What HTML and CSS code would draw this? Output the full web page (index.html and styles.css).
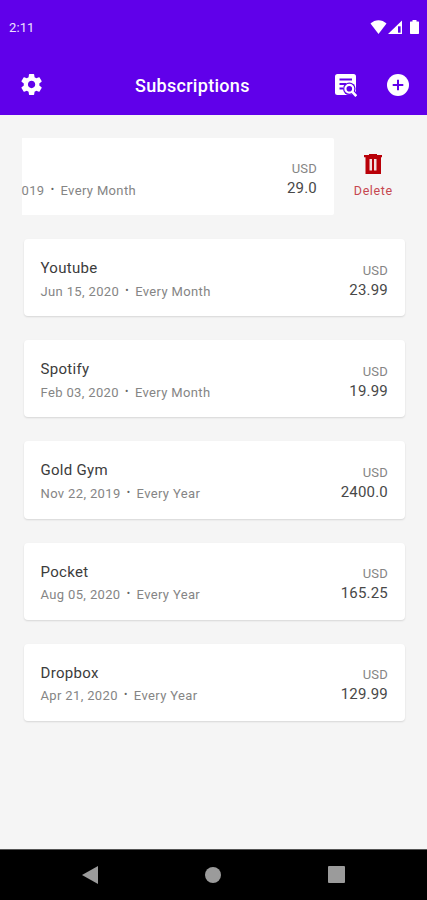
FILE: index.html
```html
<!DOCTYPE html>
<html lang="en">
<head>
<meta charset="utf-8">
<title>Subscriptions</title>
<link rel="stylesheet" href="styles.css">
</head>
<body>
<div class="screen">
  <header class="top">
    <div class="status">
      <span class="time">2:11</span>
      <svg class="status-icons" width="51" height="16" viewBox="0 0 51 16" fill="#fff">
        <path d="M0.5 3.600C5-1 12-1 16.500 3.600L8.500 14Z"/>
        <path d="M32 .5V14H18Z"/>
        <path d="M28 6.300h2.600v6.400H28z" fill="#6000ea"/>
        <path d="M40.500 1.500h2V0h4v1.500h2q.5 0 .5.700V13.300q0 .7-.7.700h-7.600q-.7 0-.7-.700V2.200q0-.7.500-.700z"/>
      </svg>
    </div>
    <div class="toolbar">
      <svg class="icon gear" viewBox="0 0 24 24" fill="#fff"><path d="M19.500 12.980c.04-.32.070-.64.070-.98s-.03-.66-.07-.98l2.110-1.650c.19-.15.240-.42.120-.64l-2-3.460c-.12-.22-.39-.3-.61-.22l-2.490 1c-.52-.4-1.080-.73-1.690-.98l-.38-2.650C14.530 2.180 14.320 2 14.070 2h-4c-.25 0-.46.180-.49.420L9.200 5.070c-.61.250-1.170.590-1.690.980l-2.490-1c-.23-.09-.49 0-.61.220l-2 3.460c-.13.220-.07.490.120.640l2.110 1.650c-.04.320-.07.650-.07.980s.03.660.070.980l-2.110 1.650c-.19.150-.24.420-.12.640l2 3.460c.12.220.39.300.61.220l2.490-1c.52.400 1.080.730 1.690.980l.38 2.650c.03.240.24.420.49.420h4c.25 0 .46-.18.490-.42l.38-2.650c.61-.25 1.170-.59 1.690-.98l2.490 1c.23.090.49 0 .61-.22l2-3.460c.12-.22.070-.49-.12-.64l-2.110-1.650zM12.070 15.500c-1.930 0-3.500-1.570-3.500-3.500s1.570-3.500 3.500-3.500 3.500 1.570 3.500 3.500-1.570 3.500-3.500 3.500z"/></svg>
      <h1>Subscriptions</h1>
      <svg class="icon report" viewBox="0 0 22 24" fill="none">
        <rect x="0" y="0" width="21" height="21" rx="2.500" fill="#fff"/>
        <path d="M4.500 5.500h12.500M4.500 10h6.500M4.500 14.500h3.500" stroke="#6000ea" stroke-width="1.800"/>
        <circle cx="14.300" cy="14.800" r="6.300" fill="#6000ea"/>
        <path d="M17 17.500l5 5" stroke="#6000ea" stroke-width="5"/>
        <circle cx="14.300" cy="14.800" r="3.900" stroke="#fff" stroke-width="2.200"/>
        <path d="M17 17.500l4.300 4.600" stroke="#fff" stroke-width="2.600"/>
      </svg>
      <svg class="icon add" viewBox="0 0 22 22"><circle cx="11" cy="11" r="11" fill="#fff"/><path d="M11 5.700v10.600M5.700 11h10.600" stroke="#6000ea" stroke-width="2"/></svg>
    </div>
  </header>

  <main class="list">
    <div class="swiped">
      <div class="swiped-card">
        <div class="meta"><span>019</span><span class="dot">•</span><span>Every Month</span></div>
        <div class="price"><span class="cur">USD</span><span class="amount">29.0</span></div>
      </div>
      <div class="delete">
        <svg width="18" height="20" viewBox="0 0 18 20"><path d="M0 1h5V0h8v1h5v2.200h-1V20H1.500V3.200H0z" fill="#b90008"/><path d="M5.500 5h2.500v11.500H5.500zM10 5h2.500v11.500H10z" fill="#f3dfe0"/></svg>
        <span>Delete</span>
      </div>
    </div>
    <article class="card">
      <div><h2>Youtube</h2><div class="meta"><span>Jun 15, 2020</span><span class="dot">•</span><span>Every Month</span></div></div>
      <div class="price"><span class="cur">USD</span><span class="amount">23.99</span></div>
    </article>
    <article class="card">
      <div><h2>Spotify</h2><div class="meta"><span>Feb 03, 2020</span><span class="dot">•</span><span>Every Month</span></div></div>
      <div class="price"><span class="cur">USD</span><span class="amount">19.99</span></div>
    </article>
    <article class="card">
      <div><h2>Gold Gym</h2><div class="meta"><span>Nov 22, 2019</span><span class="dot">•</span><span>Every Year</span></div></div>
      <div class="price"><span class="cur">USD</span><span class="amount">2400.0</span></div>
    </article>
    <article class="card">
      <div><h2>Pocket</h2><div class="meta"><span>Aug 05, 2020</span><span class="dot">•</span><span>Every Year</span></div></div>
      <div class="price"><span class="cur">USD</span><span class="amount">165.25</span></div>
    </article>
    <article class="card">
      <div><h2>Dropbox</h2><div class="meta"><span>Apr 21, 2020</span><span class="dot">•</span><span>Every Year</span></div></div>
      <div class="price"><span class="cur">USD</span><span class="amount">129.99</span></div>
    </article>
  </main>

  <nav class="navbar">
    <svg width="16" height="18" viewBox="0 0 16 18"><path d="M0 9L16 0v18z" fill="#9b9b9b"/></svg>
    <svg width="16" height="16" viewBox="0 0 16 16"><circle cx="8" cy="8" r="8" fill="#9b9b9b"/></svg>
    <svg width="17" height="17" viewBox="0 0 17 17"><rect width="17" height="17" rx="1" fill="#9b9b9b"/></svg>
  </nav>
</div>
</body>
</html>
```

FILE: styles.css
```css
* { box-sizing: border-box; }
body { margin: 0; font-family: Roboto, "Liberation Sans", sans-serif; }
h1, h2 { margin: 0; }
svg { display: block; flex: none; }
.screen { width: 427px; height: 900px; display: flex; flex-direction: column; background: #f5f5f5; overflow: hidden; }

.top { height: 114.500px; flex: none; background: #6000ea; color: #fff; }
.status { height: 56px; padding: 0 6px 0 9px; display: flex; justify-content: space-between; }
.time { margin-top: 20px; font-size: 13px; line-height: 16px; letter-spacing: .1px; color: #ede2fd; }
.status-icons { margin-top: 20px; }
.toolbar { height: 57px; padding: 0 18px 0 19px; display: flex; align-items: center; }
.toolbar h1 { margin: 2px 0 0 91px; width: 116px; font-size: 18px; font-weight: 500; line-height: 24px; letter-spacing: .3px; white-space: nowrap; }
.icon.gear { width: 25px; height: 25px; }
.icon.report { width: 22px; height: 24px; margin: 3px 0 0 84px; }
.icon.add { width: 22px; height: 22px; margin-left: auto; }

.list { flex: 1; padding: 23.500px 22px 0 22px; }
.swiped { height: 76.500px; margin-bottom: 24.500px; display: flex; }
.swiped-card { width: 311.500px; padding: 0 16.500px 0 0; display: flex; justify-content: space-between; background: #fff; border-radius: 0 2px 2px 0; }
.swiped-card .meta { margin: 44.500px 0 0 -.5px; }
.swiped-card .price { margin-top: 22px; }
.delete { flex: 1; padding: 16px 0 0 8px; display: flex; flex-direction: column; align-items: center; font-size: 12.500px; line-height: 16px; letter-spacing: .6px; color: #c64850; }
.delete span { margin-top: 9px; }

.card { height: 77.200px; margin: 0 0 24px 1.500px; width: 381px; padding: 19px 16.500px 0 17px; display: flex; justify-content: space-between; background: #fff; border-radius: 4px; box-shadow: 0 1px 2px rgba(0, 0, 0, .13); }
.card h2 { font-size: 15px; font-weight: 400; line-height: 20px; letter-spacing: .3px; color: #3c3c3c; }
.meta { display: flex; height: 16px; font-size: 13px; line-height: 16px; letter-spacing: .36px; color: #858585; white-space: nowrap; }
.card .meta { margin-top: 5.500px; }
.dot { width: 16px; text-align: center; font-size: 10px; line-height: 13px; color: #666; }
.price { display: flex; flex-direction: column; align-items: flex-end; }
.card .price { margin-top: 3.500px; }
.cur { font-size: 13px; line-height: 18px; letter-spacing: .2px; color: #858585; }
.amount { font-size: 15px; line-height: 20px; letter-spacing: .2px; color: #484848; }

.navbar { height: 51px; flex: none; padding: 0 82px; display: flex; align-items: center; justify-content: space-between; background: #000; border-top: 1px solid #555; }
.navbar svg { margin-bottom: 1px; }
```
